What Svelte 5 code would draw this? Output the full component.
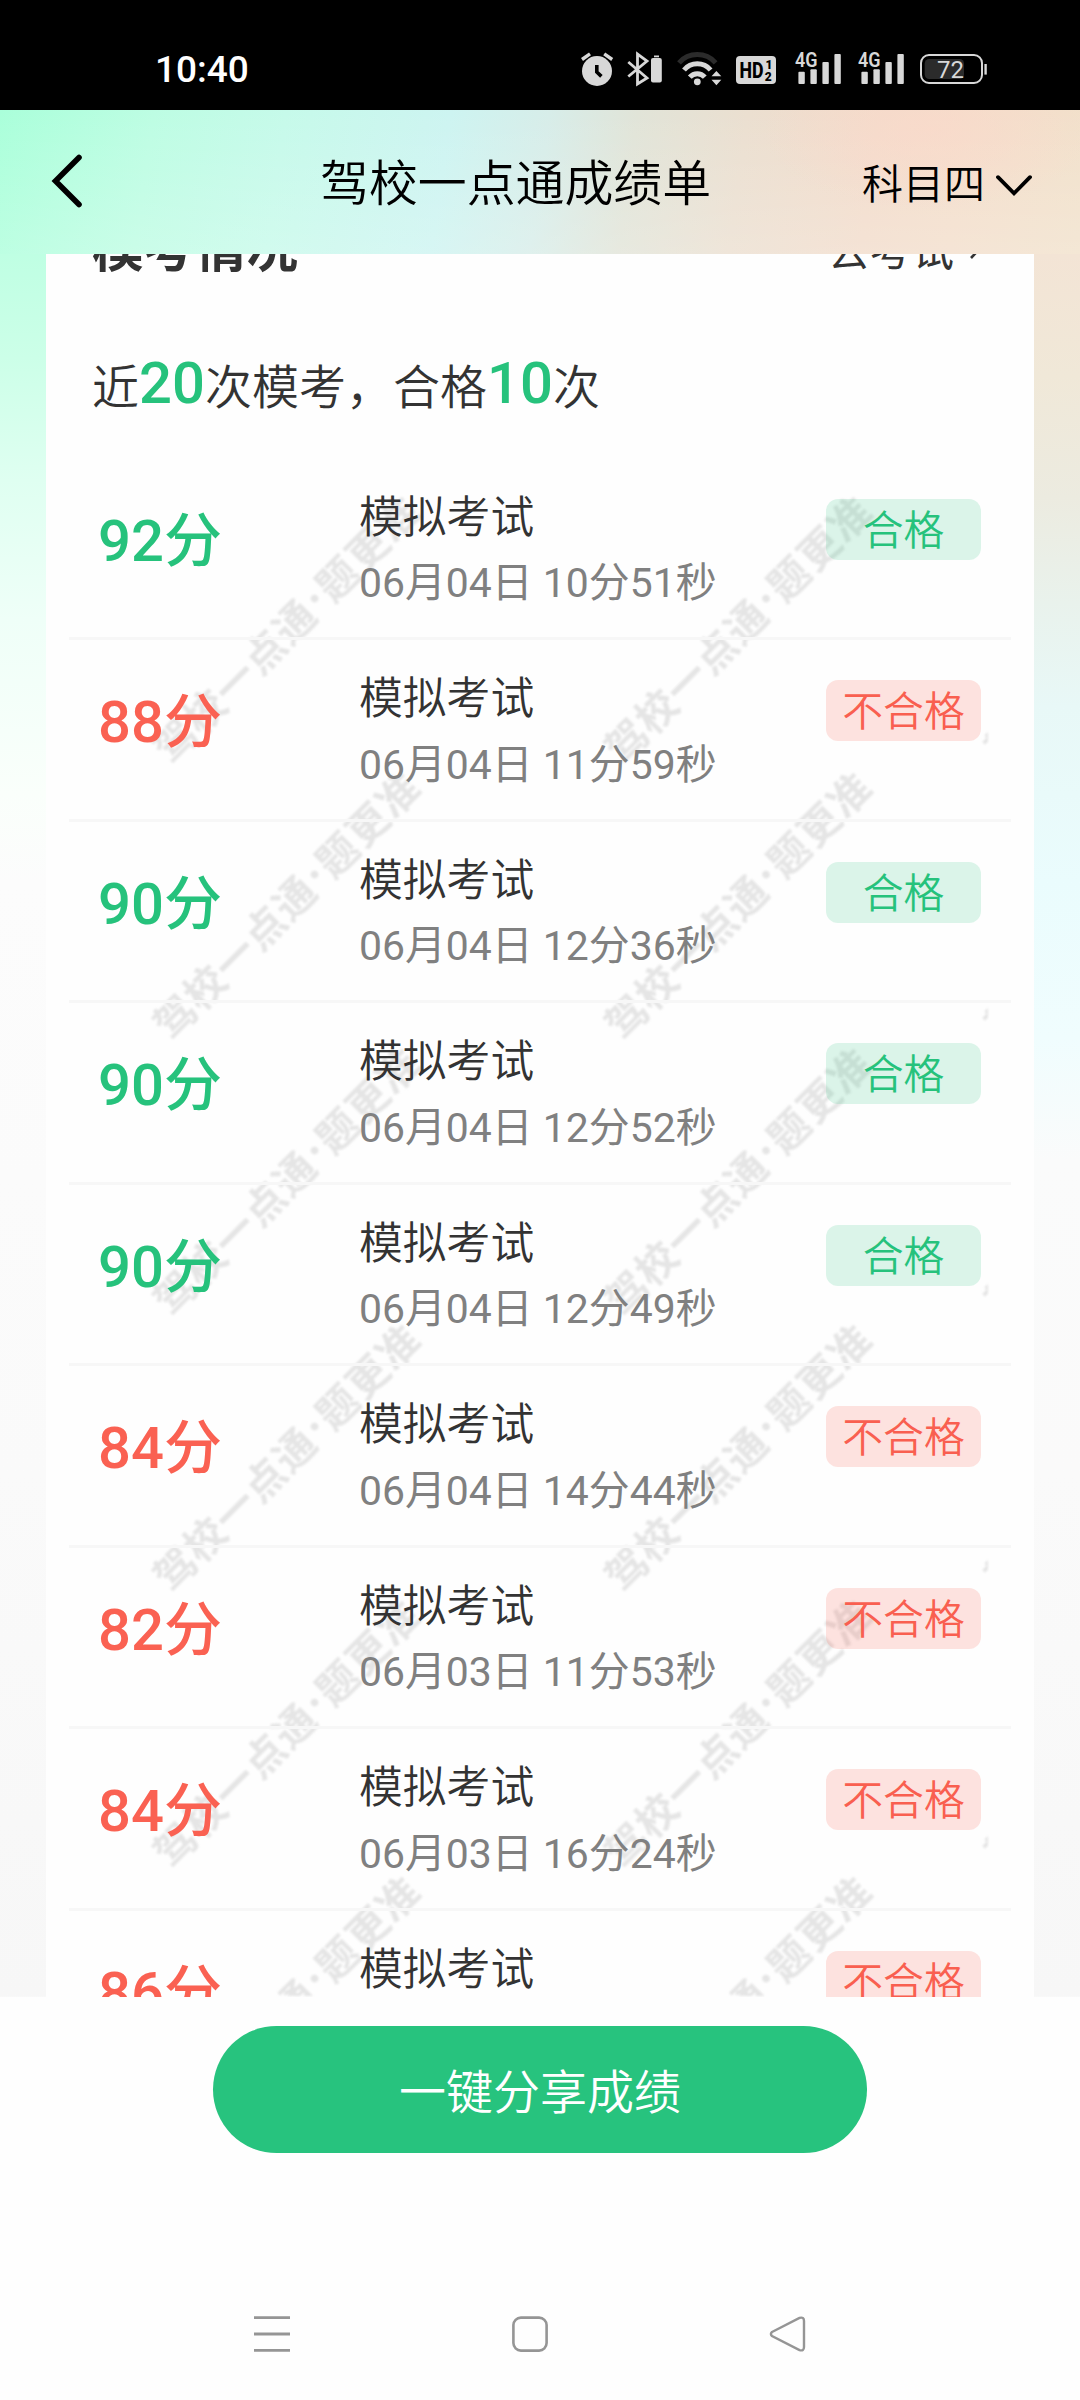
<script lang="ts">
	type Exam = { score: number; date: string; time: string };

	const PASS_SCORE = 90;

	let exams: Exam[] = [
		{ score: 92, date: '06月04日', time: '10分51秒' },
		{ score: 88, date: '06月04日', time: '11分59秒' },
		{ score: 90, date: '06月04日', time: '12分36秒' },
		{ score: 90, date: '06月04日', time: '12分52秒' },
		{ score: 90, date: '06月04日', time: '12分49秒' },
		{ score: 84, date: '06月04日', time: '14分44秒' },
		{ score: 82, date: '06月03日', time: '11分53秒' },
		{ score: 84, date: '06月03日', time: '16分24秒' },
		{ score: 86, date: '06月03日', time: '15分08秒' }
	];

	// watermark grid, in card coordinates
	const markColumns = [129.5, 581, 961];
	const markRows = [487, 763, 1039, 1315, 1591, 1867];
</script>

<div class="screen">
	<div class="status-bar">
		<span class="clock">10:40</span>
		<div class="status-icons">
			<svg width="46" height="60" viewBox="0 0 46 60">
				<circle cx="17" cy="31" r="15" fill="#d8d8d8" />
				<path d="M2 19.5 10 13.8M24.2 13.8 32.2 19.5" stroke="#d8d8d8" stroke-width="3.4" />
				<path d="M16.8 25v7l4.6 4.4" stroke="#000" stroke-width="3.6" fill="none" />
			</svg>
			<svg width="50" height="60" viewBox="0 0 50 60">
				<path d="M2.3 22 21 38 11.5 44V14L21 21 2.3 36.5" stroke="#d8d8d8" stroke-width="2.8" fill="none" />
				<rect x="25" y="18" width="10.8" height="24.4" rx="2" fill="#d8d8d8" />
				<path d="M28 16.4h5" stroke="#d8d8d8" stroke-width="1.8" />
			</svg>
			<svg width="60" height="60" viewBox="0 0 60 60" fill="none" stroke-width="5">
				<path d="M3 22.8A24.5 24.5 0 0 1 39.6 22.8" stroke="#2b2b2b" />
				<path d="M8 30A17.5 17.5 0 0 1 34.6 30" stroke="#d8d8d8" />
				<path d="M13.8 37.2A10 10 0 0 1 28.8 37.2" stroke="#d8d8d8" />
				<circle cx="21.3" cy="41.8" r="3.4" fill="#d8d8d8" />
				<path d="M35.5 36.3h9.8l-4.9-5.3zM35.5 39.8h9.8l-4.9 5.4z" fill="#d8d8d8" />
			</svg>
			<svg width="59" height="60" viewBox="0 0 59 60">
				<rect x="0" y="16" width="40" height="28" rx="4" fill="#d8d8d8" />
				<text x="3.6" y="37.8" font-size="22" font-weight="800" textLength="24" lengthAdjust="spacingAndGlyphs">HD</text>
				<text x="29.4" y="28.8" font-size="12" font-weight="900">1</text>
				<text x="28.8" y="40.8" font-size="12" font-weight="900">2</text>
			</svg>
			{#each [63, 62] as width}
				<svg {width} height="60" viewBox="0 0 {width} 60" fill="#d8d8d8">
					<text x="0" y="27.3" font-size="21" font-weight="600" textLength="22.5" lengthAdjust="spacingAndGlyphs">4G</text>
					<rect x="3.4" y="31.8" width="6.4" height="12.2" rx="1" />
					<rect x="15.4" y="29.3" width="6.4" height="14.7" rx="1" />
					<rect x="27.4" y="22" width="6.4" height="22" rx="1" />
					<rect x="39.4" y="14" width="6.4" height="30" rx="1" />
				</svg>
			{/each}
			<svg width="68" height="60" viewBox="0 0 68 60">
				<rect x="1" y="15" width="61" height="28" rx="8" fill="none" stroke="#d8d8d8" stroke-width="2" />
				<rect x="4.7" y="19" width="39.3" height="20" rx="4.5" fill="#2b2b2b" />
				<path d="M65.6 24v10.6" stroke="#d8d8d8" stroke-width="2.4" />
				<text x="17" y="37.6" font-size="24" font-weight="400" fill="#d8d8d8">72</text>
			</svg>
		</div>
	</div>

	<header>
		<svg class="back" width="34" height="56" viewBox="0 0 34 56">
			<path d="M28 4.5 4.5 28 28 51.5" fill="none" stroke="#000" stroke-width="5.6" stroke-linecap="round" />
		</svg>
		<h1>驾校一点通成绩单</h1>
		<div class="subject">
			<span>科目四</span>
			<svg width="36" height="22" viewBox="0 0 36 22">
				<path d="M2 2.2 18 18.4 34 2.2" fill="none" stroke="#000" stroke-width="3.8" stroke-linecap="round" />
			</svg>
		</div>
	</header>

	<main>
		<section class="card">
			<svg class="watermark" width="942" height="1742">
				{#each markColumns as x}
					{#each markRows as y}
						<g transform="translate({x} {y}) rotate(-45)">
							<text x="0 42 84 126 168 229 272 314" y="15">驾校一点通题更准</text>
							<text x="199" y="9" font-size="30">·</text>
						</g>
					{/each}
				{/each}
			</svg>

			<div class="section-title">
				<h2>模考情况</h2>
				<div class="go-exam">
					<span>去考试</span>
					<svg width="12" height="20" viewBox="0 0 12 20">
						<path d="M2 2 9.5 10 2 18" fill="none" stroke="#333" stroke-width="2.6" />
					</svg>
				</div>
			</div>

			<p class="summary">近<b>20</b>次模考，合格<b>10</b>次</p>

			<ul>
				{#each exams as exam}
					<li class:pass={exam.score >= PASS_SCORE}>
						<div class="score">{exam.score}分</div>
						<div class="info">
							<div class="name">模拟考试</div>
							<div class="date">{exam.date} {exam.time}</div>
						</div>
						<div class="tag">{exam.score >= PASS_SCORE ? '合格' : '不合格'}</div>
					</li>
				{/each}
			</ul>
		</section>
	</main>

	<footer>
		<button>一键分享成绩</button>
	</footer>

	<nav>
		<svg width="40" height="40" viewBox="0 0 40 40" fill="none" stroke="#959595" stroke-width="2.8">
			<path d="M2 3.6h36M2 20h36M2 36.4h36" />
		</svg>
		<svg width="40" height="40" viewBox="0 0 40 40" fill="none" stroke="#959595" stroke-width="2.6">
			<rect x="3.4" y="3.6" width="33.2" height="33" rx="7.5" />
		</svg>
		<svg width="40" height="40" viewBox="0 0 40 40" fill="none" stroke="#959595" stroke-width="2.4">
			<path d="M4 18 31.5 3.9Q36 2.6 36 7V33Q36 37.4 31.5 36.1L4 22Q1.8 20 4 18Z" />
		</svg>
	</nav>
</div>

<style>
	:global(body) {
		background: #fefefe;
	}
	.screen {
		width: 1080px;
		height: 2400px;
		display: flex;
		flex-direction: column;
		overflow: hidden;
		background: #fefefe;
		font-family: Roboto, 'Noto Sans CJK SC', sans-serif;
		color: #333;
	}
	.status-bar {
		height: 110px;
		flex-shrink: 0;
		display: flex;
		justify-content: space-between;
		box-sizing: border-box;
		padding: 40px 92px 0 155px;
		background: #000;
	}
	.clock {
		color: #fff;
		font-size: 37px;
		font-weight: 500;
		line-height: 60px;
	}
	.status-icons {
		display: flex;
	}
	header {
		height: 144px;
		flex-shrink: 0;
		display: flex;
		align-items: center;
		box-sizing: border-box;
		padding: 0 48px 0 51px;
		color: #000;
		background:
			radial-gradient(ellipse 170px 80px at 930px 20px, rgba(252, 216, 202, 0.6), transparent),
			linear-gradient(to bottom, rgba(255, 255, 255, 0), rgba(255, 255, 255, 0.2)),
			linear-gradient(98deg, #aaffda 0, #bdfde3 14%, #c6faea 26%, #cdf4f1 41%, #d7ede9 50%, #e1e4d8 58%, #ebdfd0 68%, #f2dccb 80%, #f3decb 88%, #f1e1cb 100%);
	}
	h1 {
		margin: 6px 0 0 235px;
		font-size: 48.9px;
		font-weight: 350;
		line-height: 70px;
	}
	.back {
		margin-top: -2px;
	}
	.subject {
		margin-left: auto;
		display: flex;
		align-items: center;
		gap: 11px;
		font-size: 41px;
		font-weight: 350;
	}
	.subject span {
		margin-top: -3px;
	}
	.subject svg {
		margin-top: 7px;
	}
	main {
		height: 1742.5px;
		flex-shrink: 0;
		overflow: hidden;
		display: flex;
		justify-content: center;
		background:
			linear-gradient(to bottom, #bfffe3 0, #ccffe8 6%, #dffff1 13%, #effff8 21%, #fafffb 31%, #fcfcfc 36%, #fafafa 70%, #f7f7f7 100%) left / 46px 100% no-repeat,
			linear-gradient(to bottom, #f3e4d5 0, #f0e8d8 7%, #ecebe0 14%, #e9f2ec 20%, #e8f8f7 26%, #eafcfd 36%, #f0fdfe 45%, #fafbfb 52%, #fafafa 70%, #f7f7f7 100%) right / 46px 100% no-repeat;
	}
	.card {
		position: relative;
		width: 988px;
		background: #fefefe;
	}
	.watermark {
		position: absolute;
		left: 0;
		top: 0;
		fill: #e5e5e5;
		font-family: 'Noto Sans CJK SC', sans-serif;
		font-size: 41px;
		font-weight: 700;
		text-anchor: middle;
		filter: blur(0.8px);
	}
	.section-title,
	.summary,
	ul {
		position: relative;
	}
	.section-title {
		height: 72px;
		margin-top: -40px;
		padding: 0 53px 0 46px;
		display: flex;
		align-items: center;
		justify-content: space-between;
	}
	h2 {
		margin: 0;
		font-size: 51.5px;
		font-weight: 700;
		line-height: 72px;
	}
	.go-exam {
		display: flex;
		align-items: center;
		gap: 15px;
		font-size: 42px;
	}
	.go-exam span {
		margin-top: -5px;
	}
	.summary {
		box-sizing: border-box;
		height: 172.5px;
		margin: 0;
		padding: 67px 0 0 46px;
		font-size: 47px;
		font-weight: 350;
		line-height: 70px;
	}
	.summary b {
		position: relative;
		top: -1px;
		font-size: 58px;
		font-weight: 500;
		line-height: 1;
		color: #26c27c;
	}
	ul {
		margin: 0;
		padding: 0 23px;
		list-style: none;
	}
	li {
		display: flex;
		align-items: flex-start;
		box-sizing: border-box;
		height: 181.5px;
		padding: 0 30px 0 29px;
		border-bottom: 3px solid #f7f7f7;
	}
	.score {
		width: 261px;
		margin-top: 47px;
		font-size: 58px;
		font-weight: 500;
		line-height: 70px;
		color: #fa6152;
	}
	.info {
		flex: 1;
		padding-top: 27px;
		line-height: 65.5px;
	}
	.name {
		font-size: 43.8px;
		font-weight: 350;
	}
	.date {
		font-size: 40.9px;
		color: #808080;
	}
	.tag {
		width: 155px;
		height: 61px;
		margin-top: 40px;
		border-radius: 12px;
		font-size: 40.8px;
		font-weight: 350;
		line-height: 65.5px;
		text-align: center;
		color: #f95f50;
		background: rgba(250, 80, 60, 0.16);
	}
	.pass .score {
		color: #26c27c;
	}
	.pass .tag {
		color: #26c27c;
		background: rgba(38, 194, 124, 0.16);
	}
	footer {
		flex: 1;
		display: flex;
		justify-content: center;
		align-items: flex-start;
		padding-top: 29.5px;
	}
	button {
		width: 654px;
		height: 127px;
		padding: 0 0 2px;
		border: none;
		border-radius: 64px;
		background: #27c37e;
		color: #fff;
		font-family: inherit;
		font-size: 47px;
		font-weight: 350;
	}
	nav {
		display: flex;
		justify-content: center;
		gap: 218px;
		padding: 0 20px 46px 0;
	}
</style>
